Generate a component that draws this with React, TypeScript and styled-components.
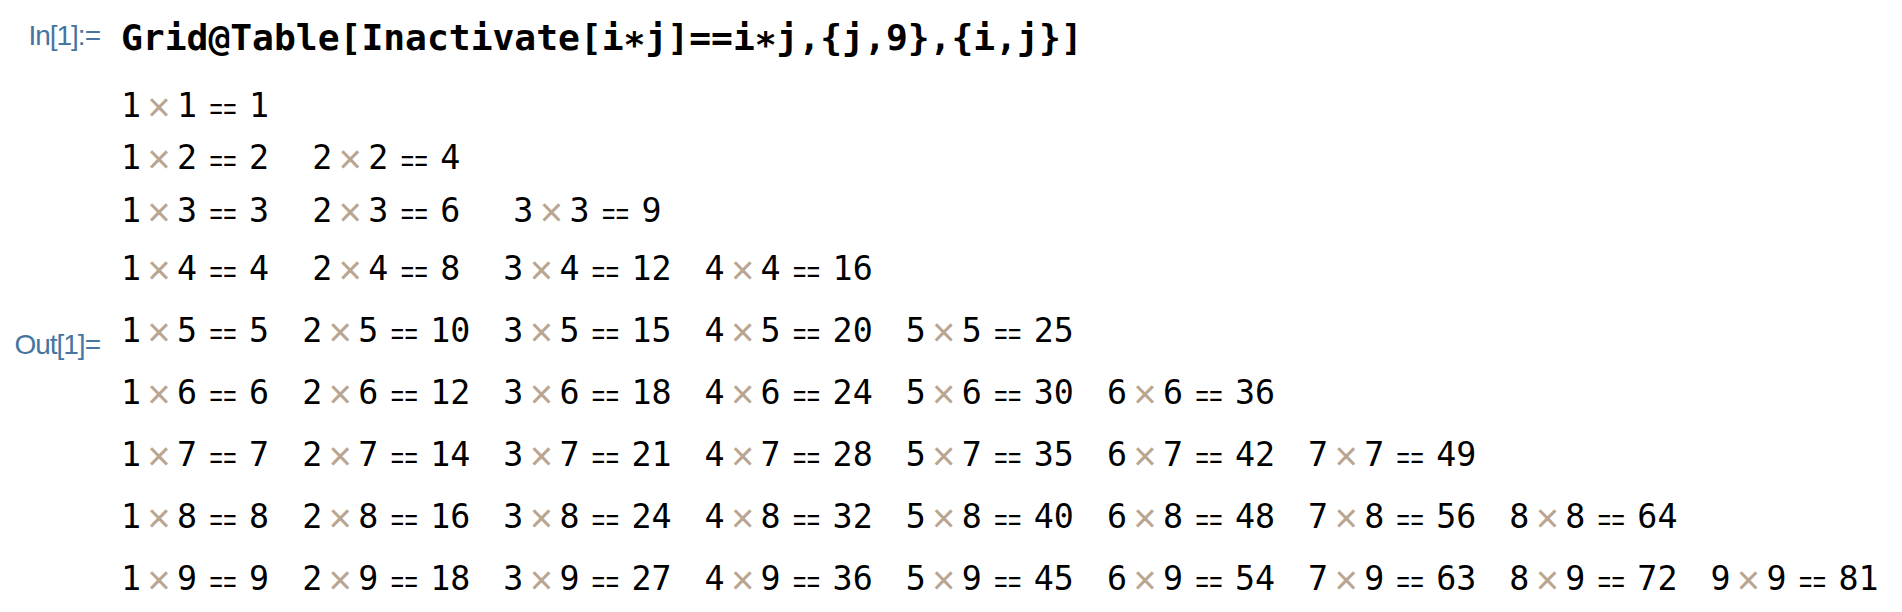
import React from "react";
import styled, { createGlobalStyle } from "styled-components";

const GlobalStyle = createGlobalStyle`
  html, body {
    margin: 0;
    padding: 0;
    background: #ffffff;
  }
  body {
    font-family: "Liberation Sans", Arial, sans-serif;
  }
`;

const rows = [1, 2, 3, 4, 5, 6, 7, 8, 9];

const App: React.FC = () => {
  return (
    <>
      <GlobalStyle />
      <Notebook>
        <CellRow>
          <Label $shift={-4}>In[1]:=</Label>
          <Code>
            Grid@Table[Inactivate[i<Star>*</Star>j]==i<Star>*</Star>j,{"{"}j,9{"}"},{"{"}i,j{"}"}]
          </Code>
        </CellRow>
        <CellRow>
          <Label $shift={4}>Out[1]=</Label>
          <OutGrid>
            {rows.map((j) =>
              rows
                .filter((i) => i <= j)
                .map((i) => (
                  <Entry key={`${i}-${j}`} $row={j} $col={i}>
                    <Num>{i}</Num>
                    <Times>×</Times>
                    <Num>{j}</Num>
                    <Eq>==</Eq>
                    <Num>{i * j}</Num>
                  </Entry>
                ))
            )}
          </OutGrid>
        </CellRow>
      </Notebook>
    </>
  );
};

export default App;

/* Notebook */
const Notebook = styled.div`
  padding-top: 18px;
  display: flex;
  flex-direction: column;
  gap: 20px;
`;

/* one In / Out cell with its label */
const CellRow = styled.div`
  display: grid;
  grid-template-columns: 121px auto;
  align-items: center;
`;

const Label = styled.div<{ $shift?: number }>`
  justify-self: end;
  margin-right: 21px;
  margin-top: ${(p) => p.$shift ?? 0}px;
  font-family: "Liberation Sans", Arial, sans-serif;
  font-size: 28px;
  letter-spacing: -1px;
  line-height: 40px;
  color: #4676a0;
  white-space: nowrap;
`;

const Code = styled.div`
  font-family: "DejaVu Sans Mono", "Liberation Mono", monospace;
  font-weight: 700;
  font-size: 36.3px;
  line-height: 40px;
  color: #000;
  white-space: pre;
`;

/* multiplication star drawn centred like the front end does */
const Star = styled.span`
  display: inline-block;
  transform: translateY(7px);
`;

/* Output grid */
const OutGrid = styled.div`
  display: grid;
  grid-template-columns: repeat(9, max-content);
  grid-template-rows: 52px 52px 54px repeat(6, 62px);
  column-gap: 33px;
  justify-items: center;
  align-items: center;
`;

const Entry = styled.div<{ $row: number; $col: number }>`
  grid-row: ${(p) => p.$row};
  grid-column: ${(p) => p.$col};
  display: flex;
  align-items: baseline;
  white-space: nowrap;
  color: #000;
`;

const Num = styled.span`
  font-family: "DejaVu Sans Mono", "Liberation Mono", monospace;
  font-size: 33.3px;
  line-height: 40px;
`;

const Times = styled.span`
  display: inline-block;
  width: 36px;
  text-align: center;
  font-family: "Liberation Sans", Arial, sans-serif;
  font-size: 40px;
  line-height: 40px;
  color: #b9a590;
  transform: translateY(4px);
`;

const Eq = styled.span`
  display: inline-block;
  width: 52px;
  text-align: center;
  font-family: "Liberation Mono", monospace;
  font-size: 23px;
  transform-origin: 50% 12px;
  transform: scaleY(1.3);
`;
